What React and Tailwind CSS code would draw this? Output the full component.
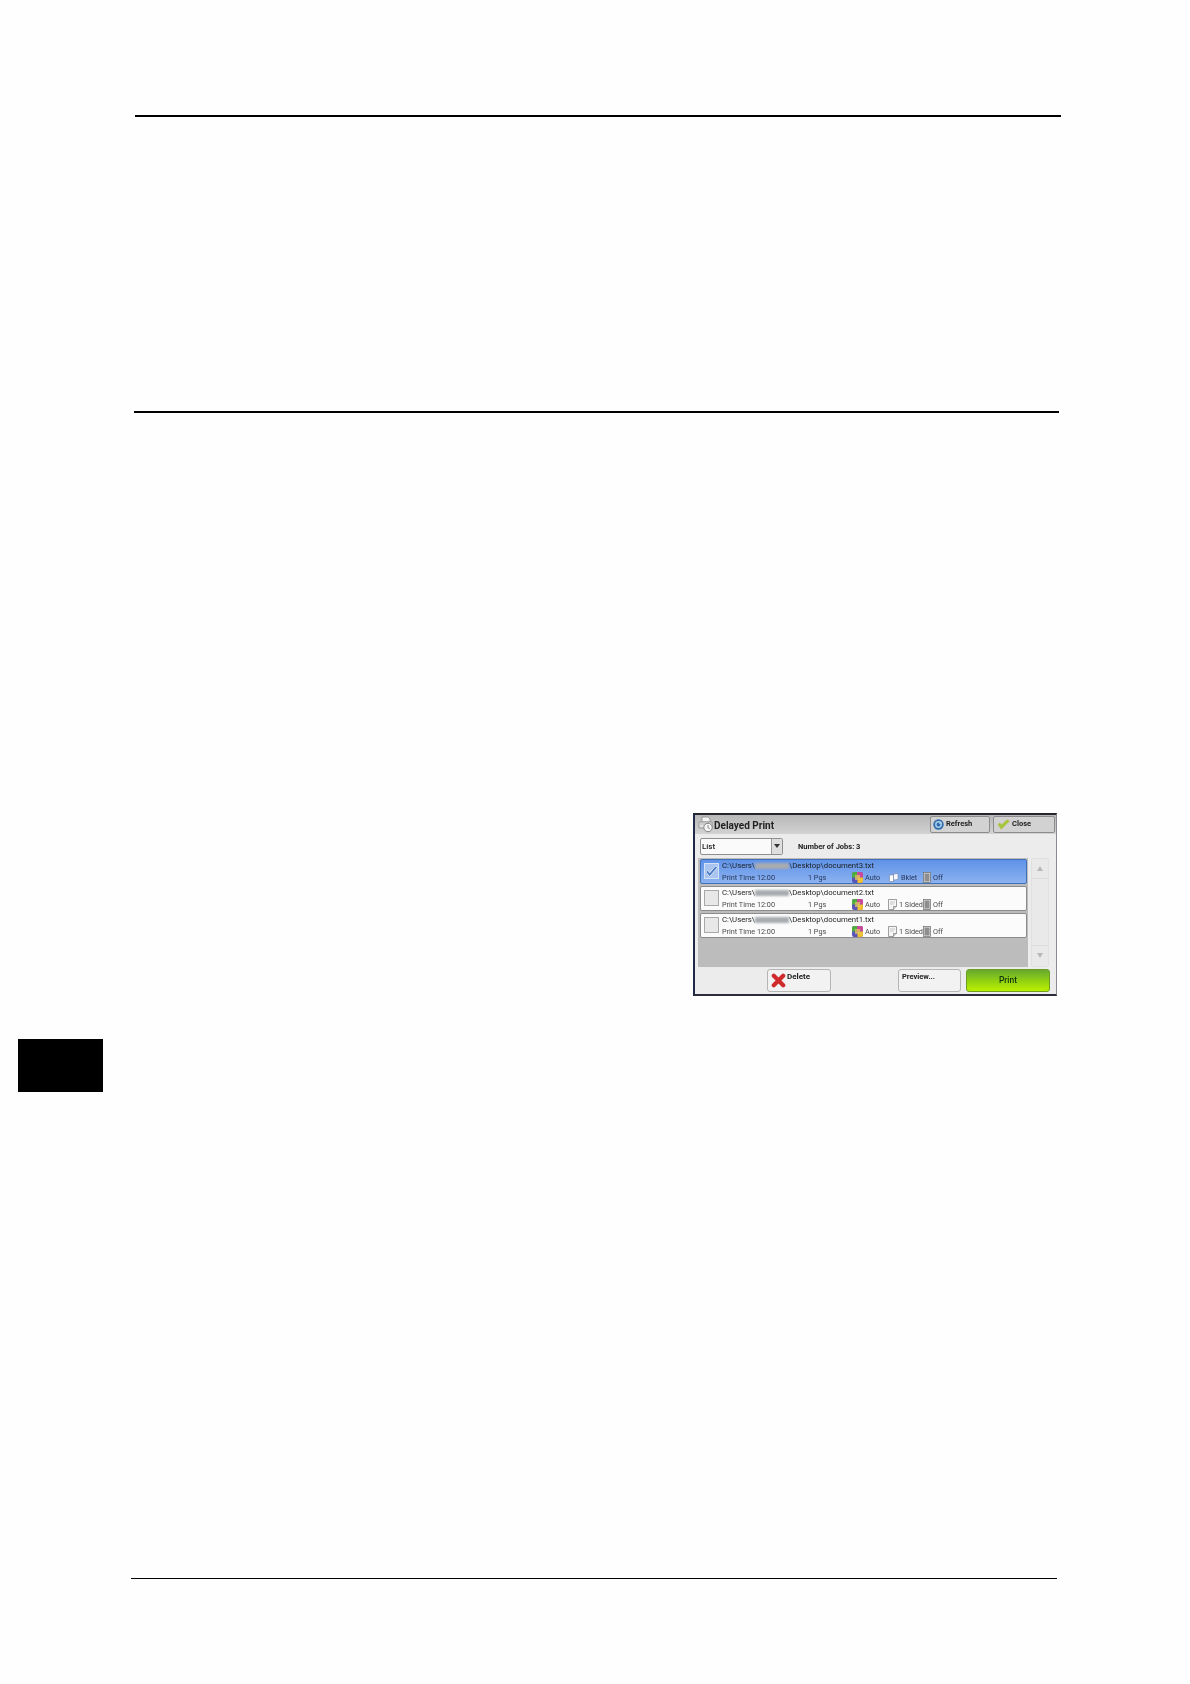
const rows = [
  { path: "document3.txt", selected: true, finish: "Bklet" },
  { path: "document2.txt", selected: false, finish: "1 Sided" },
  { path: "document1.txt", selected: false, finish: "1 Sided" },
];

function PrinterClockIcon() {
  return (
    <svg width="16" height="17" viewBox="0 0 16 17" className="shrink-0">
      <path d="M4 1h6l2 2v3H4z" fill="#f4f4f4" stroke="#8a8a8a" strokeWidth="0.8" />
      <path d="M1 6h13v6H1z" fill="#e2e2e2" stroke="#8a8a8a" strokeWidth="0.8" />
      <path d="M2.500 8h10" stroke="#a5a5a5" strokeWidth="0.8" />
      <circle cx="10" cy="11.500" r="4.200" fill="#f6f6f6" stroke="#777" strokeWidth="0.9" />
      <path d="M10 9v2.600l1.800 1" fill="none" stroke="#666" strokeWidth="0.8" />
    </svg>
  );
}

function RefreshIcon() {
  return (
    <svg width="11" height="11" viewBox="0 0 11 11" className="shrink-0">
      <circle cx="5.500" cy="5.500" r="5.200" fill="#2f6cae" />
      <circle cx="5.500" cy="5.500" r="2.700" fill="none" stroke="#a9cdea" strokeWidth="1.500" />
      <path d="M6.800 1.800l2.600 2.800-3.300.4z" fill="#a9cdea" />
    </svg>
  );
}

function CheckIcon() {
  return (
    <svg width="13" height="11" viewBox="0 0 13 11" className="shrink-0">
      <path d="M1 5.500l3.200 4.700L12.500 2 10 .8 4.600 5.800 2.800 4z" fill="#9ccb3a" stroke="#cfae44" strokeWidth="0.6" />
    </svg>
  );
}

function CrossIcon() {
  return (
    <svg width="15" height="15" viewBox="0 0 15 15" className="shrink-0">
      <path d="M2.800 2.800l9.400 9.400M12.200 2.800l-9.400 9.400" stroke="#cf2a2c" strokeWidth="4.200" strokeLinecap="round" />
    </svg>
  );
}

function ColorIcon() {
  return (
    <svg width="11" height="11" viewBox="0 0 11 11" className="shrink-0">
      <rect width="11" height="11" rx="2" fill="#5a56b8" />
      <path d="M0 2a2 2 0 0 1 2-2h3v5.500H0z" fill="#4fae3f" />
      <path d="M5 0h4a2 2 0 0 1 2 2v3.500H5z" fill="#c84a9a" />
      <path d="M5.500 5.500H11V9a2 2 0 0 1-2 2H5.500z" fill="#f0c030" />
      <path d="M3 3h5v5H3z" fill="#e8c860" opacity="0.7" />
    </svg>
  );
}

function BookletIcon() {
  return (
    <svg width="10" height="9" viewBox="0 0 10 9" className="ml-[1px] shrink-0">
      <path d="M4.500 1L9 .5v6L4.500 7z" fill="#f4f8ff" stroke="#6d7f9e" strokeWidth="0.6" />
      <path d="M.5 2h4v6.500h-4z" fill="#fff" stroke="#6d7f9e" strokeWidth="0.6" />
    </svg>
  );
}

function SidedIcon() {
  return (
    <svg width="9" height="11" viewBox="0 0 9 11" className="shrink-0">
      <path d="M.5.5h8v7l-3 3h-5z" fill="#f5f5f5" stroke="#777" strokeWidth="0.7" />
      <path d="M5.500 10.500v-3h3" fill="#ddd" stroke="#777" strokeWidth="0.7" />
      <path d="M2 3h5M2 5h4" stroke="#aaa" strokeWidth="0.6" />
    </svg>
  );
}

function OffIcon() {
  return (
    <svg width="8" height="11" viewBox="0 0 8 11" className="shrink-0">
      <rect x="0.4" y="0.4" width="7.200" height="10.200" fill="#e4e4e4" stroke="#6a6a6a" strokeWidth="0.7" />
      <rect x="1.500" y="1.500" width="5" height="8" fill="#8e8e8e" />
    </svg>
  );
}

function JobRow({ path, selected, finish }) {
  return (
    <div
      className={`flex h-[25px] items-center rounded-[2px] border pl-[3px] ${
        selected
          ? "border-[#3f70b8] bg-gradient-to-b from-[#5f92e8] to-[#8cb2f0]"
          : "border-[#8c8c8c] bg-[#fbfbfb]"
      }`}
    >
      <div
        className={`flex h-[16px] w-[15px] shrink-0 items-center justify-center border ${
          selected ? "border-[#d4e2f8] bg-[#a9c4ee]" : "border-[#a8a8a8] bg-[#e8e8e8]"
        }`}
      >
        {selected && (
          <svg width="14" height="13" viewBox="0 0 14 13">
            <path d="M1 7l4 5L13.500 2 11 .8 5 8 3 5z" fill="#4a7bc6" stroke="#eef4fd" strokeWidth="0.8" />
          </svg>
        )}
      </div>
      <div className="ml-[3px] min-w-0 flex-1">
        <div className="flex h-[12px] items-center pt-[1px] text-[7.75px] leading-none text-[#1d1d1d]">
          <span>C:\Users\</span>
          <span className="h-[6px] w-[34px] bg-[#a8abb0] blur-[1px]" />
          <span>\Desktop\{path}</span>
        </div>
        <div className={`flex h-[12px] items-center pt-[1px] text-[7.25px] leading-none ${selected ? "text-[#24365a]" : "text-[#4a4a4a]"}`}>
          <span className="w-[86px]">Print Time 12:00</span>
          <span className="w-[44px]">1 Pgs</span>
          <ColorIcon />
          <span className="ml-[2px] w-[23px]">Auto</span>
          {finish === "Bklet" ? <BookletIcon /> : <SidedIcon />}
          <span className={finish === "Bklet" ? "w-[24px] pl-[2px]" : "w-[26px] pl-[2px]"}>{finish}</span>
          <OffIcon />
          <span className="ml-[2px]">Off</span>
        </div>
      </div>
    </div>
  );
}

function DelayedPrintPanel() {
  return (
    <div className="ml-[693px] flex h-[183px] w-[364px] flex-col border-t-2 border-r border-b-2 border-l-2 border-t-[#26262c] border-r-[#8a8a92] border-b-[#2c2c3a] border-l-[#1f2a4a] bg-[#ececec] font-['Roboto',sans-serif] blur-[0.4px]">
      {/* title bar */}
      <div className="flex h-[19px] shrink-0 items-center bg-gradient-to-b from-[#b8b8b8] to-[#d2d2d2] pl-[3px] pr-[1px]">
        <PrinterClockIcon />
        <span className="pt-[2px] text-[10px] font-bold text-[#222]">Delayed Print</span>
        <div className="ml-auto flex gap-[3px]">
          <button className="flex h-[17px] w-[60px] items-center gap-[2px] rounded-[2px] border border-[#8c8c8c] bg-[#d2d2d2] pl-[2px] text-[7.5px] font-bold text-[#222]">
            <RefreshIcon />
            Refresh
          </button>
          <button className="flex h-[17px] w-[62px] items-center gap-[2px] rounded-[2px] border border-[#8c8c8c] bg-[#d2d2d2] pl-[3px] text-[7.5px] font-bold text-[#222]">
            <CheckIcon />
            Close
          </button>
        </div>
      </div>

      {/* filter */}
      <div className="flex h-[24px] shrink-0 items-center pl-[5px] pt-[1px]">
        <div className="flex h-[17px] w-[83px] rounded-[2px] border border-[#8f8f8f] bg-[#fafafa]">
          <span className="flex-1 pl-[1px] text-[8px] font-medium leading-[15px] text-[#222]">List</span>
          <span className="flex w-[11px] items-center justify-center border-l border-[#9a9a9a] bg-[#dedede]">
            <svg width="6" height="4" viewBox="0 0 6 4">
              <path d="M0 0h6L3 4z" fill="#333" />
            </svg>
          </span>
        </div>
        <span className="ml-[15px] pt-[2px] text-[7.5px] font-bold text-[#222]">Number of Jobs: 3</span>
      </div>

      {/* list + scroll */}
      <div className="flex h-[109px] shrink-0 pl-[3px]">
        <div className="flex w-[330px] flex-col gap-[2px] bg-[#bcbcbc] pl-[2px] pr-[1px] pt-[1px]">
          {rows.map((row) => (
            <JobRow key={row.path} {...row} />
          ))}
        </div>
        <div className="ml-[3px] flex w-[18px] flex-col justify-between rounded-[2px] border border-[#e0e0e0] bg-[#e9e9e9]">
          <div className="flex h-[20px] items-center justify-center border-b border-[#dcdcdc]">
            <svg width="6" height="5" viewBox="0 0 6 5">
              <path d="M3 0l3 5H0z" fill="#b8b8b8" />
            </svg>
          </div>
          <div className="flex h-[21px] items-center justify-center border-t border-[#dcdcdc]">
            <svg width="6" height="5" viewBox="0 0 6 5">
              <path d="M0 0h6L3 5z" fill="#b8b8b8" />
            </svg>
          </div>
        </div>
      </div>

      {/* actions */}
      <div className="flex flex-1 items-center pl-[72px] pr-[6px]">
        <button className="flex h-[23px] w-[64px] items-start gap-[1px] rounded-[3px] border border-[#b5b5b5] bg-[#f2f2f2] pl-[3px] pt-[3px] text-[8px] font-bold leading-[7px] text-[#222]">
          <CrossIcon />
          Delete
        </button>
        <button className="ml-[67px] flex h-[23px] w-[63px] items-start rounded-[3px] border border-[#b5b5b5] bg-[#f2f2f2] pl-[3px] pt-[2px] text-[7.5px] font-bold leading-[9px] text-[#222]">
          Preview...
        </button>
        <button className="ml-[5px] h-[23px] w-[84px] rounded-[3px] border border-[#6d9e22] bg-gradient-to-b from-[#68a82c] via-[#8fd010] to-[#bcf000] pt-[1px] text-[8.5px] font-medium text-[#14380a]">
          Print
        </button>
      </div>
    </div>
  );
}

export default function App() {
  return (
    <div className="h-[1684px] w-[1190px] overflow-hidden bg-[#fefefe]">
      <div className="h-[115px]" />
      <div className="ml-[135px] h-[1.5px] w-[926px] bg-black" />
      <div className="mt-[294.5px] ml-[134px] h-[1.5px] w-[925px] bg-black" />
      <div className="mt-[400px]">
        <DelayedPrintPanel />
      </div>
      <div className="mt-[43px] ml-[18px] h-[53px] w-[85px] bg-black" />
      <div className="mt-[486px] ml-[131px] h-[1.5px] w-[926px] bg-black" />
    </div>
  );
}
